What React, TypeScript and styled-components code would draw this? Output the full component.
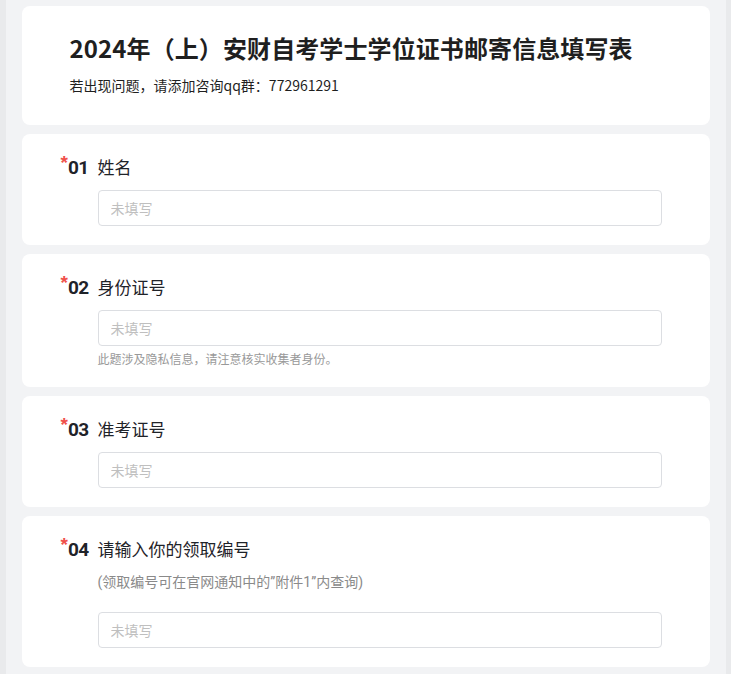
import React from "react";
import styled, { createGlobalStyle } from "styled-components";

const GlobalStyle = createGlobalStyle`
  html, body {
    margin: 0;
    padding: 0;
    background: #e9eaec;
  }
  body {
    font-family: "Noto Sans CJK SC", "Noto Sans", sans-serif;
    color: #1f2329;
  }
  * { box-sizing: border-box; }
`;

const Page = styled.div`
  width: 720px;
  margin: 0 auto;
  background: #f2f3f5;
  padding: 6px 16px 16px;
  display: flex;
  flex-direction: column;
  gap: 9px;
  min-height: 800px;
`;

const Card = styled.div`
  background: #ffffff;
  border-radius: 8px;
`;

const HeadCard = styled(Card)`
  padding: 25px 48px 30px 48px;
`;

const Title = styled.h1`
  margin: 0;
  font-size: 24px;
  line-height: 34px;
  font-weight: 700;
  letter-spacing: 0.1px;
  color: #1f1f1f;
`;

const Subtitle = styled.p`
  margin: 10px 0 0;
  font-size: 14px;
  line-height: 20px;
  color: #1f1f1f;
`;

const QuestionCard = styled(Card)`
  padding: 20px 48px 19px 39px;
  display: flex;
  flex-direction: column;
`;

const QHeader = styled.div`
  display: flex;
  align-items: center;
  height: 24px;
  margin-top: 1px;
  margin-bottom: -1px;
`;

const Mark = styled.div`
  width: 37px;
  flex: none;
  display: flex;
  align-items: center;
`;

const Star = styled.span`
  color: #f0504a;
  font-family: "Liberation Sans", sans-serif;
  font-weight: 700;
  font-size: 19px;
  line-height: 1;
  align-self: flex-start;
  margin-top: -3px;
`;

const Num = styled.span`
  font-family: "Roboto", "Liberation Sans", sans-serif;
  font-weight: 700;
  font-size: 19px;
  letter-spacing: -0.6px;
  color: #1f2329;
`;

const QTitle = styled.span`
  font-size: 17px;
  line-height: 24px;
  color: #1f2329;
`;

const QBody = styled.div`
  padding-left: 37px;
  display: flex;
  flex-direction: column;
`;

const Desc = styled.div`
  margin-top: 12px;
  font-family: "Roboto", "Noto Sans CJK SC", sans-serif;
  font-size: 14px;
  line-height: 20px;
  color: #8a8a8a;
`;

const Input = styled.input<{ $top: number }>`
  margin-top: ${(p) => p.$top}px;
  width: 100%;
  height: 36px;
  border: 1px solid #dcdee2;
  border-radius: 4px;
  padding: 0 12px;
  font-family: "Noto Sans CJK SC", sans-serif;
  font-size: 14px;
  color: #1f2329;
  outline: none;
  &::placeholder {
    color: #bfbfbf;
  }
`;

const Hint = styled.div`
  margin-top: 4px;
  font-size: 12px;
  line-height: 18px;
  color: #999999;
`;

type Q = {
  no: string;
  title: string;
  desc?: string;
  hint?: string;
};

const questions: Q[] = [
  { no: "01", title: "姓名" },
  { no: "02", title: "身份证号", hint: "此题涉及隐私信息，请注意核实收集者身份。" },
  { no: "03", title: "准考证号" },
  { no: "04", title: "请输入你的领取编号", desc: "(领取编号可在官网通知中的”附件1”内查询)" },
];

export default function App() {
  return (
    <>
      <GlobalStyle />
      <Page>
        <HeadCard>
          <Title>2024年（上）安财自考学士学位证书邮寄信息填写表</Title>
          <Subtitle>若出现问题，请添加咨询qq群：772961291</Subtitle>
        </HeadCard>
        {questions.map((q) => (
          <QuestionCard key={q.no}>
            <QHeader>
              <Mark>
                <Star>*</Star>
                <Num>{q.no}</Num>
              </Mark>
              <QTitle>{q.title}</QTitle>
            </QHeader>
            <QBody>
              {q.desc && <Desc>{q.desc}</Desc>}
              <Input $top={q.desc ? 20 : 12} placeholder="未填写" />
              {q.hint && <Hint>{q.hint}</Hint>}
            </QBody>
          </QuestionCard>
        ))}
      </Page>
    </>
  );
}
